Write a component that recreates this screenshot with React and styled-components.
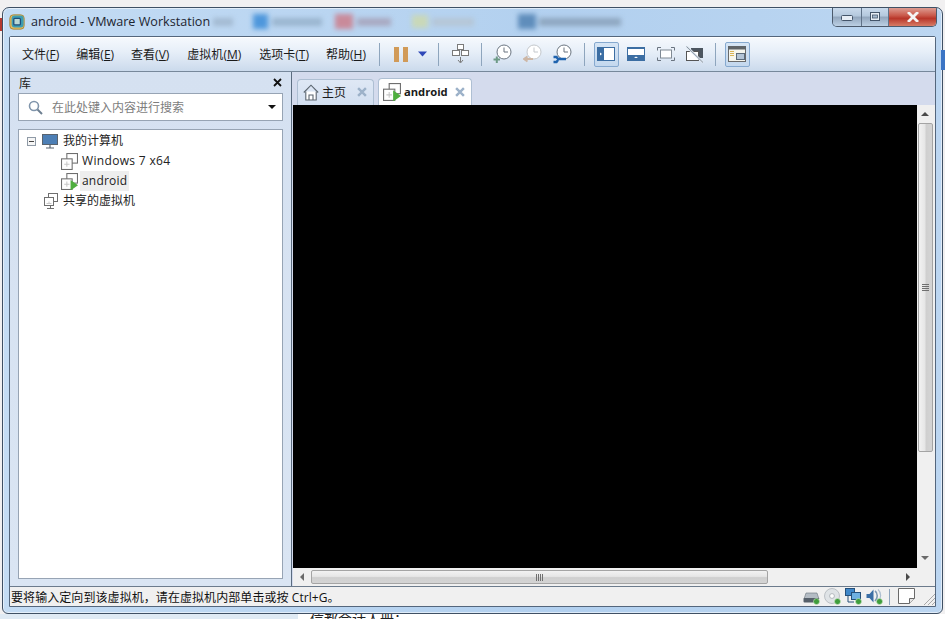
import React from 'react'
import styled, { createGlobalStyle } from 'styled-components'

const Global = createGlobalStyle`
html,body{margin:0;padding:0;width:945px;height:619px;overflow:hidden;background:#f0f0f0;}
#root{width:945px;height:619px;}
`

const CJK = `"Open Sans","Noto Sans CJK SC",sans-serif`

const Desktop = styled.div`
width:945px;
height:619px;
display:flex;
flex-direction:column;
padding-top:7px;
box-sizing:border-box;
position:relative;
overflow:hidden;
background:#f1f0f1;
font-family:${CJK};
`
const EdgeMark = styled.div`
position:absolute;
left:${p => p.$left}px;
top:${p => p.$top}px;
width:${p => p.$w}px;
height:${p => p.$h}px;
background:${p => p.$color};
`
const Window = styled.div`
width:941px;
height:607px;
margin-left:2px;
flex:none;
box-sizing:border-box;
border:1px solid #3f5064;
border-radius:7px 7px 6px 6px;
background:linear-gradient(90deg,#c4dcf4 0,#b2d0ef 60%,#bcd6f1 100%);
box-shadow:inset 0 0 0 1px rgba(255,255,255,.55);
display:flex;
flex-direction:column;
padding:0 6px 6px 6px;
overflow:hidden;
`
const TitleBar = styled.div`
height:28px;
flex:none;
display:flex;
align-items:center;
position:relative;
box-sizing:border-box;
padding-bottom:1px;
`
const AppTitle = styled.div`
font-size:12.6px;
color:#1d2530;
margin-left:6px;
margin-top:-1px;
white-space:nowrap;
`
const Blurs = styled.div`
display:flex;
align-items:center;
margin-left:3px;
filter:blur(2.6px);
`
const Blur = styled.div`
width:${p => p.$w}px;
height:${p => p.$h || 12}px;
margin-left:${p => p.$ml || 0}px;
background:${p => p.$c};
`
const Controls = styled.div`
position:absolute;
right:-1px;
top:-1px;
height:19px;
display:flex;
border:1px solid #4c5a6c;
border-top:none;
border-radius:0 0 5px 5px;
overflow:hidden;
`
const Ctl = styled.div`
width:${p => p.$w}px;
height:19px;
display:flex;
align-items:center;
justify-content:center;
background:${p => p.$close ? 'linear-gradient(#e0a49a 0,#c9584a 45%,#b8362a 60%,#d77c66 100%)' : 'linear-gradient(#ccdcee 0,#b5c9de 45%,#94a8bf 55%,#bcd0e4 100%)'};
border-right:${p => p.$close ? 'none' : '1px solid #5f7288'};
box-sizing:border-box;
`
const Frame = styled.div`
flex:1;
min-height:0;
display:flex;
flex-direction:column;
border:1px solid #54667c;
border-radius:2px 2px 0 0;
background:#f0f0f0;
`
const Toolbar = styled.div`
height:35px;
flex:none;
display:flex;
align-items:center;
padding-left:12px;
background:linear-gradient(#f6f9fd 0,#e6eef8 45%,#cbdaec 100%);
border-bottom:1px solid #77889b;
box-shadow:inset 0 1px 0 #fff;
box-sizing:border-box;
`
const Menu = styled.div`
font-size:12px;
color:#1a1a1a;
margin-right:${p => p.$mr}px;
margin-top:-1px;
white-space:nowrap;
u{text-underline-offset:1px;}
`
const Sep = styled.div`
width:1px;
height:${p => p.$h || 23}px;
background:#8ea5bd;
flex:none;
margin:0 ${p => p.$r}px 0 ${p => p.$l}px;
`
const ToolBtn = styled.div`
width:${p => p.$w}px;
height:25px;
flex:none;
margin-left:${p => p.$ml || 0}px;
margin-right:${p => p.$mr || 0}px;
display:flex;
align-items:center;
justify-content:center;
box-sizing:border-box;
border-radius:2px;
border:${p => p.$active ? '1px solid #86a9cf' : 'none'};
background:${p => p.$active ? 'linear-gradient(#d6e5f5,#c4d8ee)' : 'transparent'};
`
const SnapGroup = styled.div`
display:flex;
gap:11px;
`
const Body = styled.div`
flex:1;
min-height:0;
display:flex;
`
const Library = styled.div`
width:282px;
flex:none;
background:linear-gradient(#d5e1f1 0,#dae5f3 100%);
border-right:1px solid #5b6c80;
box-sizing:border-box;
display:flex;
flex-direction:column;
padding:0 8px 7px 8px;
`
const LibHead = styled.div`
height:21px;
flex:none;
display:flex;
align-items:center;
justify-content:space-between;
font-size:12px;
color:#222;
padding:0 1px;
`
const SearchBox = styled.div`
height:28px;
flex:none;
box-sizing:border-box;
background:#fff;
border:1px solid #97a4b4;
display:flex;
align-items:center;
padding:0 9px;
font-size:12px;
color:#7d7d7d;
margin-bottom:8px;
`
const SearchText = styled.span`
margin-left:9px;
flex:1;
`
const Caret = styled.div`
width:0;
height:0;
border-left:4px solid transparent;
border-right:4px solid transparent;
border-top:4px solid #111;
margin-right:-3px;
`
const Tree = styled.div`
flex:1;
min-height:0;
background:#fff;
border:1px solid #97a4b4;
padding-top:1px;
font-size:12px;
color:#222;
`
const Row = styled.div`
height:20px;
display:flex;
align-items:center;
padding-left:${p => p.$indent}px;
`
const Expander = styled.div`
width:9px;
height:9px;
box-sizing:border-box;
border:1px solid #8f9aa6;
margin-right:6px;
position:relative;
background:#f6f6f6;
&::after{content:'';position:absolute;left:1px;top:3px;width:5px;height:1px;background:#444;}
`
const Label = styled.span`
margin-left:${p => p.$ml}px;
padding:0 2px;
line-height:20px;
letter-spacing:${p => p.$ls || 0}px;
background:${p => p.$sel ? '#eeeeee' : 'transparent'};
`
const Main = styled.div`
flex:1;
min-width:0;
background:#d4dbed;
display:flex;
flex-direction:column;
`
const Tabs = styled.div`
height:33px;
flex:none;
display:flex;
align-items:flex-end;
padding-left:5px;
gap:4px;
`
const Tab = styled.div`
height:${p => p.$on ? 27 : 26}px;
width:${p => p.$w}px;
box-sizing:border-box;
border:1px solid #aebfd3;
border-bottom:none;
border-radius:4px 4px 0 0;
background:${p => p.$on ? '#fff' : 'linear-gradient(#dfe8f5,#d2dff0)'};
display:flex;
align-items:center;
padding:0 6px 1px ${p => p.$on ? 4 : 5}px;
font-size:${p => p.$on ? 11.2 : 12}px;
font-weight:${p => p.$on ? 700 : 400};
color:#1a1a1a;
`
const TabName = styled.span`
margin-left:${p => p.$ml}px;
flex:1;
white-space:nowrap;
`
const Stage = styled.div`
flex:1;
min-height:0;
display:grid;
grid-template-columns:1fr 18px;
grid-template-rows:1fr 18px;
margin-left:1px;
`
const Screen = styled.div`
background:#000;
`
const VBar = styled.div`
background:#f0f0f0;
display:flex;
flex-direction:column;
align-items:center;
padding-right:2px;
`
const HBar = styled.div`
background:#f0f0f0;
display:flex;
align-items:center;
`
const Corner = styled.div`
background:#f0f0f0;
`
const ArrowBtn = styled.div`
flex:none;
width:${p => p.$w || 15}px;
height:${p => p.$h || 17}px;
display:flex;
align-items:center;
justify-content:center;
`
const Tri = styled.div`
width:0;
height:0;
border-style:solid;
border-color:transparent;
${p => p.$dir === 'up' && 'border-width:0 4px 4px 4px;border-bottom-color:#4a4a4a;'}
${p => p.$dir === 'down' && 'border-width:4px 4px 0 4px;border-top-color:#6a6a6a;'}
${p => p.$dir === 'left' && 'border-width:4px 4px 4px 0;border-right-color:#6a6a6a;'}
${p => p.$dir === 'right' && 'border-width:4px 0 4px 4px;border-left-color:#4a4a4a;'}
`
const VThumb = styled.div`
width:15px;
height:329px;
flex:none;
box-sizing:border-box;
border:1px solid #a4a4a4;
border-radius:2px;
background:linear-gradient(90deg,#f2f2f2 0,#e6e6e6 45%,#cfcfcf 55%,#d4d4d4 100%);
display:flex;
align-items:center;
justify-content:center;
`
const HThumb = styled.div`
width:457px;
height:14px;
flex:none;
box-sizing:border-box;
border:1px solid #a4a4a4;
border-radius:2px;
background:linear-gradient(#f2f2f2 0,#e6e6e6 45%,#cfcfcf 55%,#d4d4d4 100%);
display:flex;
align-items:center;
justify-content:center;
`
const Track = styled.div`
flex:1;
`
const Grip = styled.div`
display:flex;
flex-direction:${p => p.$v ? 'column' : 'row'};
gap:1px;
i{display:block;background:#6f6f6f;${p => p.$v ? 'width:7px;height:1px;' : 'width:1px;height:7px;'}}
`
const StatusBar = styled.div`
height:20px;
flex:none;
display:flex;
align-items:center;
background:#f0f0f0;
border-top:1px solid #6c7b8c;
box-sizing:border-box;
font-size:12px;
color:#111;
padding-left:1px;
`
const StatusText = styled.div`
flex:1;
white-space:nowrap;
letter-spacing:.07px;
`
const StatusIcon = styled.div`
width:${p => p.$w || 17}px;
height:17px;
margin-right:${p => p.$mr ?? 4}px;
flex:none;
display:flex;
align-items:${p => p.$end ? 'flex-end' : 'stretch'};
`
const Below = styled.div`
height:5px;
flex:none;
overflow:hidden;
display:flex;
background:#dfeaf4;
`
const PageBit = styled.div`
margin-left:298px;
flex:1;
background:#fff;
font-size:14px;
line-height:10px;
color:#222;
padding-left:12px;
white-space:nowrap;
`

const Logo = () => (
  <svg width="16" height="16" viewBox="0 0 16 16">
    <rect x=".8" y=".8" width="14.4" height="14.4" rx="3.5" fill="#e3bb5c" stroke="#a08034" strokeWidth=".8"/>
    <rect x="2.6" y="1.6" width="12" height="12" rx="3" fill="#3c9db3"/>
    <rect x="4.8" y="4.3" width="6.6" height="6.6" rx="1" fill="#b9d8d6" stroke="#1f4e7a" strokeWidth="1.3"/>
  </svg>
)

const Win = ({ ic }) => (
  <svg width="12" height="10" viewBox="0 0 12 10">
    {ic === 'min' && <rect x="0.5" y="3.5" width="11" height="5" rx="1" fill="#e6edf5" stroke="#44556a"/>}
    {ic === 'max' && <><rect x="1.5" y="0.5" width="9" height="8" fill="#e6edf5" stroke="#44556a"/><rect x="3.5" y="3" width="5" height="3" fill="#a5b9cf" stroke="#44556a" strokeWidth=".8"/></>}
    {ic === 'close' && <path d="M2 1 L10 9 M10 1 L2 9" stroke="#f4f4f4" strokeWidth="2.8" strokeLinecap="square"/>}
  </svg>
)

const Pause = () => (
  <svg width="14" height="15" viewBox="0 0 14 15"><rect width="5" height="15" fill="#d19a58"/><rect x="9" width="5" height="15" fill="#d19a58"/></svg>
)
const DownTri = () => (
  <svg width="9" height="6" viewBox="0 0 9 6"><path d="M0 0.5H9L4.5 5.5Z" fill="#2f48b8"/></svg>
)
const SendIcon = () => (
  <svg width="17" height="20" viewBox="0 0 17 20" fill="#fff" stroke="#7a7a7a">
    <rect x="5.5" y=".5" width="6" height="5"/>
    <rect x=".5" y="6.5" width="7" height="5"/>
    <rect x="9.5" y="6.5" width="7" height="5"/>
    <path d="M8.5 13v5M6 16l2.5 3 2.5-3" fill="none"/>
  </svg>
)
const Snap = ({ kind }) => {
  const dim = kind === 'back'
  const stroke = dim ? '#c4c8cc' : '#6b7580'
  return (
    <svg width="19" height="20" viewBox="0 0 19 20">
      <circle cx="11" cy="8" r="7" fill="#fff" stroke={stroke}/>
      <path d="M11 3.5V8H15" fill="none" stroke={stroke}/>
      {kind === 'add' && <path d="M0.5 15.5H7M3.8 12.5V19" stroke="#6d9a86" strokeWidth="2"/>}
      {kind === 'back' && <path d="M1 15H10M4.5 12.5L1 15l3.5 2.5" fill="none" stroke="#cdb7a6" strokeWidth="2"/>}
      {kind === 'tool' && <path d="M0.5 13h3l1.5 2H13M0.5 18h3L5 16" fill="none" stroke="#1f63ae" strokeWidth="2.4"/>}
    </svg>
  )
}
const Pane = ({ kind }) => (
  <svg width="18" height="14" viewBox="0 0 18 14">
    {kind === 'side' && <><rect x=".5" y=".5" width="17" height="13" fill="#fff" stroke="#3c6ea3"/><rect width="7" height="14" fill="#3c6ea3"/><path d="M3 5.5L5 7 3 8.5Z" fill="#fff"/></>}
    {kind === 'bottom' && <><rect x=".5" y=".5" width="17" height="13" fill="#fff" stroke="#3c6ea3"/><rect width="18" height="2" fill="#3c6ea3"/><rect y="8" width="18" height="6" fill="#3c6ea3"/><path d="M7 11h4L9 9.5Z" fill="#fff"/></>}
  </svg>
)
const FullScreen = () => (
  <svg width="18" height="14" viewBox="0 0 18 14" fill="none">
    <rect x="3.5" y="3" width="11" height="8" fill="#fff" stroke="#808a94"/>
    <path d="M0.5 3.5V.5H4M14 .5H17.5V3.5M.5 10.5V13.5H4M14 13.5H17.5V10.5" stroke="#6a7480"/>
  </svg>
)
const NoUnity = () => (
  <svg width="18" height="17" viewBox="0 0 18 17">
    <rect x="5" y="2" width="12" height="10" fill="#4d5660"/>
    <rect x=".5" y="5.5" width="12" height="9" fill="#fff" stroke="#555"/>
    <path d="M.5 .5L17 16.5" stroke="#dfe7f1" strokeWidth="2.4"/>
    <path d="M.5 .5L17 16.5" stroke="#8a949e" strokeWidth="1"/>
  </svg>
)
const TabsIcon = () => (
  <svg width="18" height="16" viewBox="0 0 18 16">
    <rect x=".5" y=".5" width="17" height="15" fill="#f5f5ee" stroke="#6a6a6a"/>
    <rect width="18" height="3.5" fill="#5f6468"/>
    <path d="M2 5.5h4M2 7.5h4M2 9.5h4" stroke="#d8b458"/>
    <rect x="8.5" y="7.5" width="8" height="6" fill="#b4c4d6" stroke="#5b6a7a"/>
  </svg>
)
const Lens = () => (
  <svg width="15" height="15" viewBox="0 0 15 15" fill="none">
    <circle cx="6" cy="6" r="4.5" stroke="#8095ab" strokeWidth="1.6"/>
    <path d="M9.5 9.5L14 14" stroke="#6d7f91" strokeWidth="2"/>
  </svg>
)
const CloseX = ({ c = '#111', s = 9, w = 1.8 }) => (
  <svg width={s} height={s} viewBox="0 0 9 9"><path d="M1 1L8 8M8 1L1 8" stroke={c} strokeWidth={w}/></svg>
)
const Monitor = () => (
  <svg width="16" height="15" viewBox="0 0 16 15">
    <rect x=".5" y=".5" width="15" height="10" fill="#4d7fb5" stroke="#59636e"/>
    <path d="M8 11v2.5M4 14h8" stroke="#59636e" strokeWidth="1.2"/>
  </svg>
)
const VmIcon = ({ run, size = 17 }) => (
  <svg width={size} height={size} viewBox="0 0 16 16">
    <rect x="5.5" y=".5" width="10" height="9" fill="#fff" stroke="#6f6f6f"/>
    <rect x=".5" y="5.5" width="10" height="10" fill="#fff" stroke="#6f6f6f"/>
    <path d="M5.5 8v5M3 10.5h5" stroke="#c8c8c8"/>
    {run && <path d="M9 6.5L16 11.5 9 16.5Z" fill="#4fae3f"/>}
  </svg>
)
const Shared = () => (
  <svg width="14" height="16" viewBox="0 0 14 16">
    <rect x="4.5" y=".5" width="9" height="8" fill="#fff" stroke="#6f6f6f"/>
    <rect x=".5" y="4.5" width="9" height="8" fill="#fff" stroke="#6f6f6f"/>
    <path d="M5 8.5v2M2.5 10.5h5" stroke="#c8c8c8"/>
    <path d="M6.5 12.5v3M3 15.5h7" stroke="#6f6f6f"/>
  </svg>
)
const Home = () => (
  <svg width="16" height="17" viewBox="0 0 16 17" fill="none" stroke="#5c6670" strokeWidth="1.1">
    <path d="M.8 8.5L8 1.2l7.2 7.3"/>
    <path d="M2.8 7.5V16h10.4V7.5" fill="#fff"/>
    <path d="M6 16v-5h4v5"/>
  </svg>
)
const Dot = () => <circle cx="13.5" cy="13.5" r="3" fill="#3f9d3c" stroke="#cfe7c8" strokeWidth=".6"/>
const Hdd = () => (
  <svg width="17" height="17" viewBox="0 0 17 17">
    <path d="M3 5h11l2 6H1Z" fill="#b4bcc4" stroke="#6a737c" strokeWidth=".6"/>
    <rect x=".5" y="10" width="15.5" height="4.5" rx="1" fill="#56606a"/>
    <Dot/>
  </svg>
)
const Disc = () => (
  <svg width="17" height="17" viewBox="0 0 17 17">
    <circle cx="8" cy="8" r="7.5" fill="#dfe3e6" stroke="#a9afb5" strokeWidth=".7"/>
    <circle cx="8" cy="8" r="2.4" fill="#fff" stroke="#9aa0a6" strokeWidth=".7"/>
    <Dot/>
  </svg>
)
const Net = () => (
  <svg width="17" height="17" viewBox="0 0 17 17">
    <rect x=".5" y=".5" width="9" height="7" fill="#3f87c9" stroke="#26507a"/>
    <rect x="6.5" y="4.5" width="9" height="7" fill="#6fb0e0" stroke="#26507a"/>
    <path d="M3 8v6h6" fill="none" stroke="#26507a"/>
    <Dot/>
  </svg>
)
const Sound = () => (
  <svg width="17" height="17" viewBox="0 0 17 17">
    <path d="M.5 6h3l4-4.5v13l-4-4.5h-3Z" fill="#3a6ea5"/>
    <path d="M9 3c3 2 3 7 0 10" fill="none" stroke="#7d98b3" strokeWidth="1.6"/>
    <path d="M12 1.5c3.5 3 3.5 9 0 12" fill="none" stroke="#aebfd0" strokeWidth="1.2"/>
    <Dot/>
  </svg>
)
const Note = () => (
  <svg width="17" height="16" viewBox="0 0 17 16" fill="#fff" stroke="#6a6a6a">
    <path d="M.5.5h16v10l-5 5h-11Z"/>
    <path d="M16.5 10.5h-5v5" fill="#e6e6e6"/>
  </svg>
)
const Resize = () => (
  <svg width="11" height="11" viewBox="0 0 11 11" stroke="#a8a8a8" strokeWidth="1"><path d="M0 11L11 0M4 11L11 4M8 11L11 8"/></svg>
)

const menus = [['文件', 'F', 17], ['编辑', 'E', 17], ['查看', 'V', 18], ['虚拟机', 'M', 18], ['选项卡', 'T', 17], ['帮助', 'H', 1]]

export default function App() {
  return (
    <Desktop>
      <Global />
      <EdgeMark $left={0} $top={18} $w={2} $h={13} $color="#b5392f" />
      <EdgeMark $left={941} $top={50} $w={4} $h={20} $color="#3b74c4" />
      <Window>
        <TitleBar>
          <Logo />
          <AppTitle>android - VMware Workstation</AppTitle>
          <Blurs>
            <Blur $w={20} $h={8} $c="#a3bad2" />
            <Blur $w={15} $h={15} $c="#4e97dc" $ml={20} />
            <Blur $w={50} $h={8} $c="#9ab5cf" $ml={4} />
            <Blur $w={18} $h={15} $c="#c98a9a" $ml={13} />
            <Blur $w={34} $h={8} $c="#a8a8c0" $ml={4} />
            <Blur $w={16} $h={13} $c="#c9d8b8" $ml={21} />
            <Blur $w={42} $h={8} $c="#b5c6d6" $ml={4} />
            <Blur $w={18} $h={15} $c="#5f8dbb" $ml={44} />
            <Blur $w={82} $h={8} $c="#8ea6bf" $ml={3} />
          </Blurs>
          <Controls>
            <Ctl $w={29}><Win ic="min" /></Ctl>
            <Ctl $w={27}><Win ic="max" /></Ctl>
            <Ctl $w={47} $close><Win ic="close" /></Ctl>
          </Controls>
        </TitleBar>
        <Frame>
          <Toolbar>
            {menus.map(([name, key, gap]) => (
              <Menu key={key} $mr={gap}>{name}(<u>{key}</u>)</Menu>
            ))}
            <Sep $l={12} $r={14} />
            <Pause />
            <ToolBtn $w={9} $ml={10}><DownTri /></ToolBtn>
            <Sep $l={11} $r={13} />
            <SendIcon />
            <Sep $l={12} $r={11} />
            <SnapGroup>
              <Snap kind="add" />
              <Snap kind="back" />
              <Snap kind="tool" />
            </SnapGroup>
            <Sep $l={12} $r={9} />
            <ToolBtn $active $w={25}><Pane kind="side" /></ToolBtn>
            <ToolBtn $w={24} $ml={5} $mr={6}><Pane kind="bottom" /></ToolBtn>
            <ToolBtn $w={24} $mr={6}><FullScreen /></ToolBtn>
            <ToolBtn $w={22}><NoUnity /></ToolBtn>
            <Sep $l={9} $r={9} />
            <ToolBtn $active $w={25}><TabsIcon /></ToolBtn>
          </Toolbar>
          <Body>
            <Library>
              <LibHead>库<CloseX /></LibHead>
              <SearchBox>
                <Lens />
                <SearchText>在此处键入内容进行搜索</SearchText>
                <Caret />
              </SearchBox>
              <Tree>
                <Row $indent={8}><Expander /><Monitor /><Label $ml={3}>我的计算机</Label></Row>
                <Row $indent={42}><VmIcon /><Label $ml={2} $ls={.33}>Windows 7 x64</Label></Row>
                <Row $indent={42}><VmIcon run /><Label $ml={2} $ls={.2} $sel>android</Label></Row>
                <Row $indent={25}><Shared /><Label $ml={3}>共享的虚拟机</Label></Row>
              </Tree>
            </Library>
            <Main>
              <Tabs>
                <Tab $w={77}><Home /><TabName $ml={3}>主页</TabName><CloseX c="#9db2c9" s={10} w={2.2} /></Tab>
                <Tab $w={94} $on><VmIcon run size={18} /><TabName $ml={3}>android</TabName><CloseX c="#9db2c9" s={10} w={2.2} /></Tab>
              </Tabs>
              <Stage>
                <Screen />
                <VBar>
                  <ArrowBtn $h={18}><Tri $dir="up" /></ArrowBtn>
                  <VThumb><Grip $v><i /><i /><i /><i /></Grip></VThumb>
                  <Track />
                  <ArrowBtn $h={20}><Tri $dir="down" /></ArrowBtn>
                </VBar>
                <HBar>
                  <ArrowBtn $w={18}><Tri $dir="left" /></ArrowBtn>
                  <HThumb><Grip><i /><i /><i /><i /></Grip></HThumb>
                  <Track />
                  <ArrowBtn $w={18}><Tri $dir="right" /></ArrowBtn>
                </HBar>
                <Corner />
              </Stage>
            </Main>
          </Body>
          <StatusBar>
            <StatusText>要将输入定向到该虚拟机，请在虚拟机内部单击或按 Ctrl+G。</StatusText>
            <StatusIcon><Hdd /></StatusIcon>
            <StatusIcon><Disc /></StatusIcon>
            <StatusIcon><Net /></StatusIcon>
            <StatusIcon $mr={6}><Sound /></StatusIcon>
            <Sep $l={0} $r={8} $h={16} />
            <StatusIcon $mr={9}><Note /></StatusIcon>
            <StatusIcon $mr={0} $w={11} $end><Resize /></StatusIcon>
          </StatusBar>
        </Frame>
      </Window>
      <Below>
        <PageBit>信都会计人册：</PageBit>
      </Below>
    </Desktop>
  )
}
